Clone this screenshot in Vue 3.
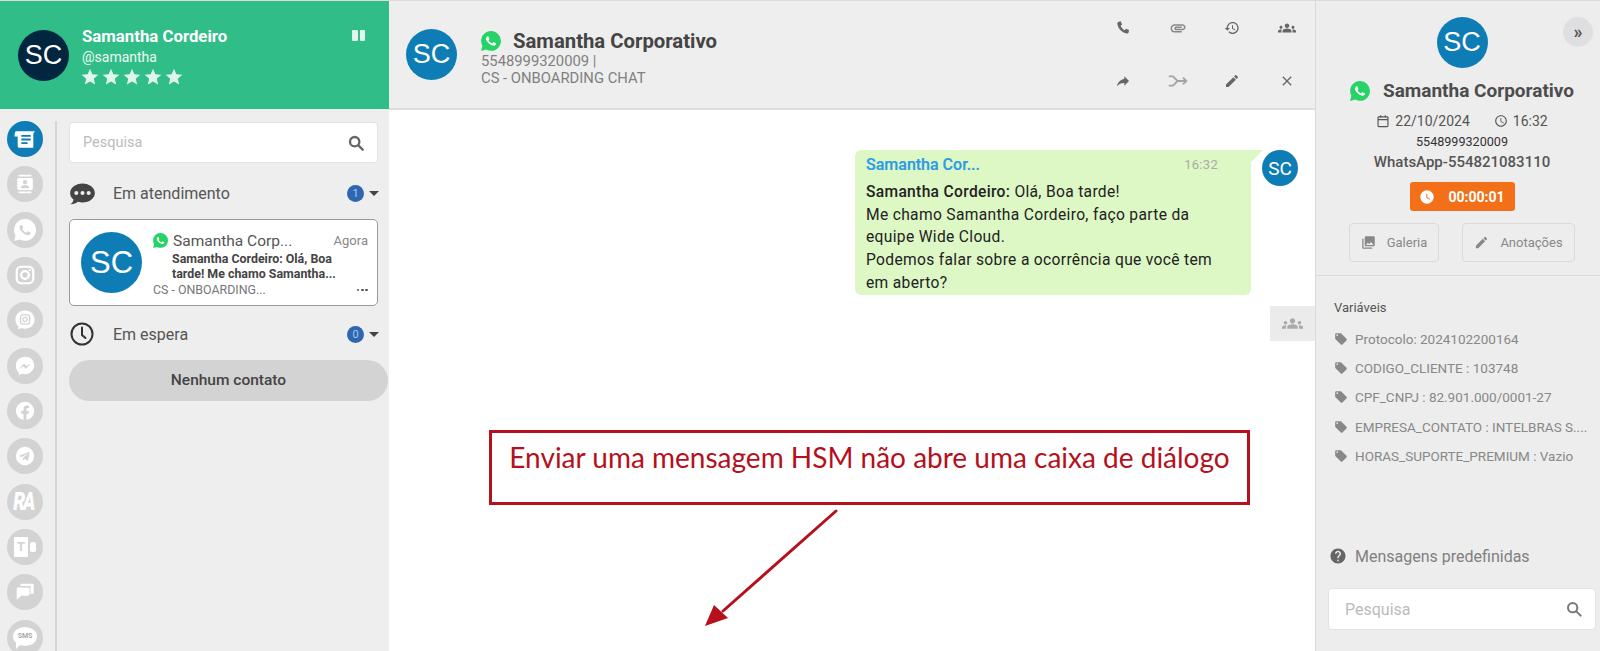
<script setup>
const icons = {
  waBubble: 'M12.05 0C5.495 0 .16 5.335.157 11.892c0 2.096.547 4.142 1.588 5.945L.057 24l6.305-1.654a11.882 11.882 0 005.683 1.448c6.554 0 11.89-5.335 11.893-11.893A11.821 11.821 0 0012.05 0z',
  waPhone: 'M17.472 14.382c-.297-.149-1.758-.867-2.03-.967-.273-.099-.471-.148-.67.15-.197.297-.767.966-.94 1.164-.173.199-.347.223-.644.075-.297-.15-1.255-.463-2.39-1.475-.883-.788-1.48-1.761-1.653-2.059-.173-.297-.018-.458.13-.606.134-.133.298-.347.446-.52.149-.174.198-.298.298-.497.099-.198.05-.371-.025-.52-.075-.149-.669-1.612-.916-2.207-.242-.579-.487-.5-.669-.51-.173-.008-.371-.01-.57-.01-.198 0-.52.074-.792.372-.272.297-1.04 1.016-1.04 2.479 0 1.462 1.065 2.875 1.213 3.074.149.198 2.096 3.2 5.077 4.487.709.306 1.262.489 1.694.625.712.227 1.36.195 1.871.118.571-.085 1.758-.719 2.006-1.413.248-.694.248-1.289.173-1.413-.074-.124-.272-.198-.57-.347z',
  star: 'M12 17.27L18.18 21l-1.64-7.03L22 9.24l-7.19-.61L12 2 9.19 8.63 2 9.24l5.46 4.73L5.82 21z',
  attach: 'M2 12.5C2 9.46 4.46 7 7.5 7H18c2.21 0 4 1.79 4 4s-1.79 4-4 4H9.5C8.12 15 7 13.88 7 12.5S8.12 10 9.5 10H17v2H9.41c-.55 0-.55 1 0 1H18c1.1 0 2-.9 2-2s-.9-2-2-2H7.5C5.57 9 4 10.57 4 12.5S5.57 16 7.5 16H17v2H7.5C4.46 18 2 15.54 2 12.5z',
  history: 'M13 3c-4.97 0-9 4.03-9 9H1l3.89 3.89.07.14L9 12H6c0-3.87 3.13-7 7-7s7 3.13 7 7-3.13 7-7 7c-1.93 0-3.68-.79-4.94-2.06l-1.42 1.42C8.27 19.99 10.51 21 13 21c4.97 0 9-4.03 9-9s-4.03-9-9-9zm-1 5v5l4.28 2.54.72-1.21-3.5-2.08V8H12z',
  group: 'M12 12.75c1.63 0 3.07.39 4.24.9 1.08.48 1.76 1.56 1.76 2.73V18H6v-1.61c0-1.18.68-2.26 1.76-2.73 1.17-.52 2.61-.91 4.24-.91zM4 13c1.1 0 2-.9 2-2s-.9-2-2-2-2 .9-2 2 .9 2 2 2zm1.13 1.1c-.37-.06-.74-.1-1.13-.1-.99 0-1.93.21-2.78.58C.48 14.9 0 15.62 0 16.43V18h4.5v-1.61c0-.83.23-1.61.63-2.29zM20 13c1.1 0 2-.9 2-2s-.9-2-2-2-2 .9-2 2 .9 2 2 2zm4 3.43c0-.81-.48-1.53-1.22-1.85-.85-.37-1.79-.58-2.78-.58-.39 0-.76.04-1.13.1.4.68.63 1.46.63 2.29V18H24v-1.57zM12 6c1.66 0 3 1.34 3 3s-1.34 3-3 3-3-1.34-3-3 1.34-3 3-3z',
  forward: 'M14 9V5l7 7-7 7v-4.1c-5 0-8.5 1.6-11 5.1 1-5 4-10 11-11z',
  edit: 'M3 17.25V21h3.75L17.81 9.94l-3.75-3.75L3 17.25zM20.71 7.04c.39-.39.39-1.02 0-1.41l-2.34-2.34c-.39-.39-1.02-.39-1.41 0l-1.83 1.83 3.75 3.75 1.83-1.83z',
  close: 'M19 6.41L17.59 5 12 10.59 6.41 5 5 6.41 10.59 12 5 17.59 6.41 19 12 13.41 17.59 19 19 17.59 13.41 12z',
  tag: 'M21.41 11.58l-9-9C12.05 2.22 11.55 2 11 2H4c-1.1 0-2 .9-2 2v7c0 .55.22 1.05.59 1.42l9 9c.36.36.86.58 1.41.58.55 0 1.05-.22 1.41-.59l7-7c.37-.36.59-.86.59-1.41 0-.55-.23-1.06-.59-1.42zM5.5 7C4.67 7 4 6.33 4 5.5S4.67 4 5.5 4 7 4.67 7 5.5 6.33 7 5.5 7z',
  help: 'M12 2C6.48 2 2 6.48 2 12s4.48 10 10 10 10-4.48 10-10S17.52 2 12 2zm1 17h-2v-2h2v2zm2.07-7.75l-.9.92C13.45 12.9 13 13.5 13 15h-2v-.5c0-1.1.45-2.1 1.17-2.83l1.24-1.26c.37-.36.59-.86.59-1.41 0-1.1-.9-2-2-2s-2 .9-2 2H8c0-2.21 1.79-4 4-4s4 1.79 4 4c0 .88-.36 1.68-.93 2.25z',
  clock: 'M11.99 2C6.47 2 2 6.48 2 12s4.47 10 9.99 10C17.52 22 22 17.52 22 12S17.52 2 11.99 2zM12 20c-4.42 0-8-3.58-8-8s3.58-8 8-8 8 3.58 8 8-3.58 8-8 8zm.5-13H11v6l5.25 3.15.75-1.23-4.5-2.67z',
  clockFill: 'M12 2C6.5 2 2 6.5 2 12s4.5 10 10 10 10-4.5 10-10S17.5 2 12 2zm4.2 14.2L11 13V7h1.5v5.2l4.5 2.7-.8 1.3z',
  gallery: 'M22 16V4c0-1.1-.9-2-2-2H8c-1.1 0-2 .9-2 2v12c0 1.1.9 2 2 2h12c1.1 0 2-.9 2-2zm-11-4l2.03 2.71L16 11l4 5H8l3-4zM2 6v14c0 1.1.9 2 2 2h14v-2H4V6H2z',
  phone: 'M5.5 2.5L8.6 2l2 4.6-2.2 1.9c.9 2.6 3.4 5.4 6.2 6.7l1.9-2.2 4.5 2-.5 3.2c-.3 1.3-1.6 2.3-3 2C10.300 19.200 4.500 12.800 3.500 5.800c-.2-1.500.8-3 2-3.300z',
  chatDots: 'M12 3C5.900 3 1 6.800 1 11.500c0 2.300 1.200 4.400 3 5.900-.2 1.700-1.200 3.200-2.800 4.100 2.800.1 5.100-.9 6.700-2.200 1.300.4 2.700.7 4.100.7 6.100 0 11-3.800 11-8.500S18.100 3 12 3zM6.500 13.300a1.800 1.800 0 110-3.600 1.800 1.800 0 010 3.600zm5.500 0a1.800 1.800 0 110-3.600 1.800 1.800 0 010 3.600zm5.500 0a1.800 1.800 0 110-3.600 1.800 1.800 0 010 3.600z',
  messenger: 'M12 2C6.400 2 2 6.100 2 11.700c0 2.900 1.200 5.500 3.200 7.200v3.100l3-1.600c1.200.3 2.500.5 3.800.5 5.600 0 10-4.100 10-9.700S17.600 2 12 2zm1 13l-2.600-2.700-5 2.700 5.500-5.800 2.600 2.700 4.900-2.700-5.400 5.800z',
  facebook: 'M22 12a10 10 0 10-11.600 9.900v-7H7.900V12h2.500V9.800c0-2.500 1.500-3.900 3.800-3.900 1.100 0 2.200.2 2.200.2v2.500h-1.200c-1.200 0-1.600.8-1.600 1.600V12h2.800l-.4 2.900h-2.400v7A10 10 0 0022 12z',
  telegram: 'M12 2a10 10 0 100 20 10 10 0 000-20zm5 6.500l-1.700 8.100c-.1.600-.5.700-1 .4l-2.600-1.900-1.300 1.200c-.2.200-.3.300-.6.300l.2-2.700 4.800-4.400c.2-.2 0-.3-.3-.1l-6 3.800-2.600-.8c-.6-.2-.6-.6.100-.8l10-3.900c.5-.2.900.1 1 .8z',
  gchat: 'M8 3h12a1.500 1.500 0 011.500 1.500v8A1.500 1.500 0 0120 14h-2v-8.500H7V4.500A1.500 1.500 0 018 3zM4 7h11.500A1.500 1.500 0 0117 8.500v6a1.500 1.500 0 01-1.500 1.500H8l-5 4.500V8.500A1.500 1.500 0 014 7z'
}

const variaveis = [
  'Protocolo: 2024102200164',
  'CODIGO_CLIENTE : 103748',
  'CPF_CNPJ : 82.901.000/0001-27',
  'EMPRESA_CONTATO : INTELBRAS S....',
  'HORAS_SUPORTE_PREMIUM : Vazio'
]
</script>

<template>
  <div class="app">
    <!-- coluna esquerda -->
    <aside class="left">
      <header class="profile">
        <div class="avatar dark size-51">SC</div>
        <div class="profile-info">
          <div class="profile-name">Samantha Cordeiro</div>
          <div class="profile-user">@samantha</div>
          <div class="stars">
            <svg v-for="n in 5" :key="n" viewBox="0 0 24 24"><path :d="icons.star" /></svg>
          </div>
        </div>
        <div class="pause"><span></span><span></span></div>
      </header>

      <div class="left-body">
        <nav class="rail">
          <div class="rail-btn active">
            <svg viewBox="0 0 24 24">
              <path d="M3 4h18l-1.500 2.500V20H6.500C5 20 4.500 19 4.500 17.500V9H1.500C1.500 6 2 4 3 4z" fill="#fff" />
              <path d="M8 8.500h9M8 12h9M8 15.500h6" stroke="#0f7db5" stroke-width="1.800" />
            </svg>
          </div>
          <div class="rail-btn">
            <svg viewBox="0 0 24 24">
              <path d="M5 2h14v1.800H5zM5 20.200h14V22H5z" fill="#fff" />
              <rect x="3.500" y="5.500" width="17" height="13" rx="1.500" fill="#fff" />
              <circle cx="12" cy="10" r="2.300" fill="#d3d3d3" />
              <path d="M7.500 16.500c0-2.500 2-3.400 4.500-3.400s4.500.9 4.500 3.400z" fill="#d3d3d3" />
            </svg>
          </div>
          <div class="rail-btn">
            <svg viewBox="0 0 24 24">
              <path :d="icons.waBubble" fill="#fff" />
              <path :d="icons.waPhone" fill="#d3d3d3" />
            </svg>
          </div>
          <div class="rail-btn">
            <svg viewBox="0 0 24 24" fill="none" stroke="#fff" stroke-width="2.400">
              <rect x="3" y="3" width="18" height="18" rx="5" />
              <circle cx="12" cy="12" r="4.200" />
              <circle cx="17.300" cy="6.700" r="1.200" fill="#fff" stroke="none" />
            </svg>
          </div>
          <div class="rail-btn">
            <svg viewBox="0 0 24 24">
              <path d="M12 1.500C6 1.500 1.500 5.800 1.500 11.500c0 3 1.200 5.600 3.300 7.400V22.500l3.200-1.700c1.200.4 2.600.7 4 .7 6 0 10.500-4.300 10.500-10S18 1.500 12 1.500z" fill="#fff" />
              <rect x="7" y="6.500" width="10" height="10" rx="2.800" fill="none" stroke="#d3d3d3" stroke-width="1.400" />
              <circle cx="12" cy="11.500" r="2.300" fill="none" stroke="#d3d3d3" stroke-width="1.400" />
            </svg>
          </div>
          <div class="rail-btn"><svg viewBox="0 0 24 24"><path :d="icons.messenger" fill="#fff" /></svg></div>
          <div class="rail-btn"><svg viewBox="0 0 24 24"><path :d="icons.facebook" fill="#fff" /></svg></div>
          <div class="rail-btn"><svg viewBox="0 0 24 24"><path :d="icons.telegram" fill="#fff" /></svg></div>
          <div class="rail-btn"><span class="rail-ra">RA</span></div>
          <div class="rail-btn">
            <span class="rail-teams"><b>T</b><i></i></span>
          </div>
          <div class="rail-btn"><svg viewBox="0 0 24 24"><path :d="icons.gchat" fill="#fff" /></svg></div>
          <div class="rail-btn">
            <span class="rail-sms">SMS</span>
          </div>
        </nav>

        <section class="contacts">
          <div class="search">
            <span>Pesquisa</span>
            <svg viewBox="0 0 24 24" fill="none" stroke="#666" stroke-width="3.500"><circle cx="10" cy="10" r="7" /><path d="M15.500 15.500L22 22" stroke-linecap="round" /></svg>
          </div>

          <div class="group-row first">
            <svg class="group-icon talk" viewBox="0 0 24 24"><path :d="icons.chatDots" fill="#444" /></svg>
            <span class="group-label">Em atendimento</span>
            <span class="badge">1</span>
            <span class="caret"></span>
          </div>

          <div class="card">
            <div class="avatar blue size-61">SC</div>
            <div class="card-body">
              <div class="card-top">
                <svg class="wa" viewBox="0 0 24 24"><path :d="icons.waBubble" fill="#25d366" /><path :d="icons.waPhone" fill="#fff" /></svg>
                <span class="card-name">Samantha Corp...</span>
                <span class="card-time">Agora</span>
              </div>
              <div class="card-msg">Samantha Cordeiro: Olá, Boa<br />tarde! Me chamo Samantha...</div>
              <div class="card-foot">
                <span>CS - ONBOARDING...</span>
                <span class="dots"><i></i><i></i><i></i></span>
              </div>
            </div>
          </div>

          <div class="group-row second">
            <svg class="group-icon" viewBox="0 0 24 24" fill="none" stroke="#333" stroke-width="2"><circle cx="12" cy="12" r="10.500" /><path d="M12 5.500V13l3.500 3" stroke-linecap="round" /></svg>
            <span class="group-label">Em espera</span>
            <span class="badge">0</span>
            <span class="caret"></span>
          </div>

          <div class="empty">Nenhum contato</div>
        </section>
      </div>
    </aside>

    <!-- conversa -->
    <main class="chat">
      <header class="chat-head">
        <div class="avatar blue size-51">SC</div>
        <div class="chat-info">
          <div class="chat-title">
            <svg class="wa-big" viewBox="0 0 24 24"><path :d="icons.waBubble" fill="#25d366" /><path :d="icons.waPhone" fill="#fff" /></svg>
            <span>Samantha Corporativo</span>
          </div>
          <div class="chat-sub">5548999320009 |</div>
          <div class="chat-sub">CS - ONBOARDING CHAT</div>
        </div>
        <div class="actions">
          <svg viewBox="0 0 24 24"><path :d="icons.phone" /></svg>
          <svg viewBox="0 0 24 24" class="light"><path :d="icons.attach" /></svg>
          <svg viewBox="0 0 24 24"><path :d="icons.history" /></svg>
          <svg viewBox="0 0 24 24" class="big"><path :d="icons.group" /></svg>
          <svg viewBox="0 0 24 24"><path :d="icons.forward" /></svg>
          <svg viewBox="0 0 24 24" class="wide" fill="none"><path d="M1 6.500h5l5.500 5.500-5.500 5.500H1M11.500 12H22M18 8l4 4-4 4" stroke="#a3a3a3" stroke-width="2.200" fill="none" /></svg>
          <svg viewBox="0 0 24 24"><path :d="icons.edit" /></svg>
          <svg viewBox="0 0 24 24"><path :d="icons.close" /></svg>
        </div>
      </header>

      <div class="chat-body">
        <div class="message">
          <div class="bubble">
            <div class="bubble-top">
              <span class="bubble-name">Samantha Cor...</span>
              <span class="bubble-time">16:32</span>
            </div>
            <div class="bubble-text">
              <b>Samantha Cordeiro:</b> Olá, Boa tarde!<br />
              Me chamo Samantha Cordeiro, faço parte da<br />
              equipe Wide Cloud.<br />
              Podemos falar sobre a ocorrência que você tem<br />
              em aberto?
            </div>
          </div>
          <div class="avatar blue size-36">SC</div>
        </div>

        <div class="side-tab">
          <svg viewBox="0 0 24 24"><path :d="icons.group" /></svg>
        </div>

        <div class="callout">Enviar uma mensagem HSM não abre uma caixa de diálogo</div>
        <svg class="arrow" viewBox="0 0 140 120">
          <line x1="131" y1="2" x2="18" y2="102" stroke="#b5101c" stroke-width="3" stroke-linecap="round" />
          <path d="M0 117L9 96 23 109z" fill="#b5101c" />
        </svg>
      </div>
    </main>

    <!-- detalhes -->
    <aside class="details">
      <button class="collapse">»</button>
      <div class="details-top">
        <div class="avatar blue size-51">SC</div>
        <div class="details-name">
          <svg class="wa-big" viewBox="0 0 24 24"><path :d="icons.waBubble" fill="#25d366" /><path :d="icons.waPhone" fill="#fff" /></svg>
          <span>Samantha Corporativo</span>
        </div>
        <div class="details-date">
          <svg viewBox="0 0 24 24" fill="none" stroke="#555" stroke-width="2"><rect x="3.500" y="5" width="17" height="16.500" rx="1.500" /><path d="M3.500 9.500h17M8 2v4M16 2v4" /></svg>
          <span>22/10/2024</span>
          <svg class="date-clock" viewBox="0 0 24 24"><path :d="icons.clock" fill="#555" /></svg>
          <span>16:32</span>
        </div>
        <div class="details-phone">5548999320009</div>
        <div class="details-channel">WhatsApp-554821083110</div>
        <div class="timer">
          <svg viewBox="0 0 24 24"><path :d="icons.clockFill" fill="#fff" /></svg>
          <span>00:00:01</span>
        </div>
        <div class="details-btns">
          <div class="ghost galeria"><svg viewBox="0 0 24 24"><path :d="icons.gallery" /></svg><span>Galeria</span></div>
          <div class="ghost anotacoes"><svg viewBox="0 0 24 24"><path :d="icons.edit" /></svg><span>Anotações</span></div>
        </div>
      </div>

      <div class="vars">
        <div class="vars-title">Variáveis</div>
        <div v-for="v in variaveis" :key="v" class="var-row">
          <svg viewBox="0 0 24 24"><path :d="icons.tag" /></svg>
          <span>{{ v }}</span>
        </div>
      </div>

      <div class="predef">
        <div class="predef-title">
          <svg viewBox="0 0 24 24"><path :d="icons.help" /></svg>
          <span>Mensagens predefinidas</span>
        </div>
        <div class="search predef-search">
          <span>Pesquisa</span>
          <svg viewBox="0 0 24 24" fill="none" stroke="#777" stroke-width="3"><circle cx="10" cy="10" r="7" /><path d="M15.500 15.500L22 22" stroke-linecap="round" /></svg>
        </div>
      </div>
    </aside>
  </div>
</template>

<style>
html, body {
  margin: 0;
  background: #fff;
}
</style>

<style scoped>
.app {
  display: flex;
  width: 1600px;
  height: 651px;
  overflow: hidden;
  font-family: Roboto, "Liberation Sans", sans-serif;
  color: #555;
  border-top: 1px solid #dcdcdc;
  box-sizing: border-box;
}

.avatar {
  display: flex;
  align-items: center;
  justify-content: center;
  flex: none;
  border-radius: 50%;
  color: #fff;
  font-family: "Liberation Sans", Arial, sans-serif;
}
.avatar.blue { background: #0f7db5; }
.avatar.dark { background: #022640; }
.size-51 { width: 51px; height: 51px; font-size: 27px; }
.size-61 { width: 61px; height: 61px; font-size: 31px; }
.size-36 { width: 36px; height: 36px; font-size: 19px; font-family: Roboto, sans-serif; }

/* esquerda */
.left {
  width: 389px;
  flex: none;
  display: flex;
  flex-direction: column;
  background: #eee;
}
.profile {
  height: 108px;
  flex: none;
  background: #30bd88;
  display: flex;
  align-items: center;
  padding: 0 24px 0 18px;
  color: #fff;
  box-sizing: border-box;
}
.profile-info {
  margin-left: 13px;
  flex: 1;
  margin-top: 1px;
}
.profile-name { font-size: 16.800px; font-weight: 700; line-height: 20px; margin-top: 1px; }
.profile-user { font-size: 14px; line-height: 20px; margin-top: 1px; color: #f0faf6; }
.stars { display: flex; gap: 1px; margin-left: -2px; }
.stars svg { width: 20px; height: 20px; fill: #e0f5ed; }
.pause { display: flex; gap: 2px; align-self: flex-start; margin-top: 29px; }
.pause span { width: 5.500px; height: 11px; background: #e0f5ed; border-radius: 1px; }

.left-body { flex: 1; display: flex; min-height: 0; }
.rail {
  width: 57px;
  flex: none;
  box-sizing: border-box;
  margin-top: 12px;
  padding: 0 0 0 7px;
  border-right: 2px solid #d6d6d6;
  display: flex;
  flex-direction: column;
  gap: 9.330px;
  overflow: hidden;
}
.rail-btn {
  width: 36px;
  height: 36px;
  flex: none;
  border-radius: 50%;
  background: #d3d3d3;
  display: flex;
  align-items: center;
  justify-content: center;
}
.rail-btn svg { width: 22px; height: 22px; }
.rail-btn.active { background: #0f7db5; }
.rail-btn.active svg { width: 25px; height: 25px; }
.rail-ra {
  color: #fff;
  font: italic 900 25px/1 Roboto, sans-serif;
  letter-spacing: -3px;
  transform: scaleX(.75);
  margin-left: -3px;
}
.rail-teams { display: flex; align-items: center; gap: 2px; }
.rail-teams b {
  display: block;
  width: 14px;
  height: 20px;
  background: #fff;
  color: #d3d3d3;
  font: 700 13px/20px Roboto, sans-serif;
  text-align: center;
}
.rail-teams i { display: block; width: 6px; height: 10px; background: #fff; border-radius: 2px; }
.rail-sms {
  position: relative;
  display: block;
  width: 24px;
  height: 19px;
  margin-top: -2px;
  border-radius: 50%;
  background: #fff;
  color: #a9a9a9;
  font: 700 7px/19px Roboto, sans-serif;
  text-align: center;
}
.rail-sms::after {
  content: "";
  position: absolute;
  left: 3px;
  bottom: -3px;
  border-top: 6px solid #fff;
  border-right: 6px solid transparent;
}

.contacts {
  flex: 1;
  padding: 13px 0 0 12px;
  min-width: 0;
}
.search {
  display: flex;
  align-items: center;
  justify-content: space-between;
  box-sizing: border-box;
  width: 309px;
  height: 41px;
  padding: 0 13px;
  background: #fff;
  border: 1px solid #e2e2e2;
  border-radius: 4px;
  font-size: 14.5px;
  color: #bbb;
}
.search svg { width: 16px; height: 16px; }
.group-row {
  display: flex;
  align-items: center;
  width: 310px;
  height: 24px;
}
.group-row.first { margin-top: 18px; }
.group-row.second { margin-top: 16px; }
.group-icon { width: 24px; height: 24px; margin-left: 1px; flex: none; }
.group-icon.talk { width: 27px; height: 27px; margin-left: 0; }
.group-label { font-size: 16px; color: #555; margin-left: 19px; flex: 1; }
.group-icon.talk + .group-label { margin-left: 17px; }
.badge {
  width: 17px;
  height: 17px;
  border-radius: 50%;
  background: #2f66b0;
  color: #a9c6ea;
  font-size: 11px;
  line-height: 17px;
  text-align: center;
}
.caret {
  width: 0;
  height: 0;
  margin-left: 5px;
  border: 5px solid transparent;
  border-top: 5px solid #444;
  border-bottom: 0;
}
.card {
  display: flex;
  box-sizing: border-box;
  width: 309px;
  height: 87px;
  margin-top: 14px;
  padding: 12px 9px 0 11px;
  background: #fff;
  border: 1px solid #9a9a9a;
  border-radius: 5px;
}
.card-body { flex: 1; margin-left: 11px; min-width: 0; }
.card-top { display: flex; align-items: center; height: 21px; margin-top: -2px; }
.wa { width: 15px; height: 15px; flex: none; }
.card-name { margin-left: 5px; font-size: 15.500px; color: #555; flex: 1; }
.card-time { font-size: 13px; color: #888; }
.card-msg {
  margin-left: 19px;
  margin-top: 1px;
  font-size: 12.400px;
  line-height: 14.500px;
  font-weight: 700;
  color: #444;
}
.card-foot {
  display: flex;
  align-items: center;
  justify-content: space-between;
  margin-top: 1px;
  font-size: 12.400px;
  color: #777;
  line-height: 16px;
}
.dots { display: flex; gap: 1.500px; }
.dots i { width: 2.800px; height: 2.800px; background: #555; border-radius: 50%; }
.empty {
  box-sizing: border-box;
  width: 319px;
  height: 41px;
  margin-top: 14px;
  border-radius: 21px;
  background: #d3d3d3;
  color: #444;
  font-size: 15.500px;
  font-weight: 500;
  line-height: 41px;
  text-align: center;
}

/* conversa */
.chat {
  width: 926px;
  flex: none;
  display: flex;
  flex-direction: column;
  background: #fff;
}
.chat-head {
  height: 109px;
  flex: none;
  box-sizing: border-box;
  background: #eee;
  border-bottom: 2px solid #ddd;
  display: flex;
  align-items: center;
  padding: 0 0 0 17px;
}
.chat-info { margin-left: 24px; flex: 1; margin-top: 9px; }
.chat-title {
  display: flex;
  align-items: center;
  gap: 12px;
  font-size: 20.300px;
  font-weight: 700;
  color: #444;
  line-height: 24px;
  margin-top: -2px;
}
.wa-big { width: 20px; height: 20px; flex: none; }
.chat-sub { font-size: 14.800px; line-height: 17px; color: #808080; }
.actions {
  display: grid;
  grid-template-columns: repeat(4, 54.500px);
  grid-template-rows: 53px 53px;
  justify-items: center;
  align-items: center;
  margin-right: 1px;
}
.actions svg { width: 16px; height: 16px; fill: #666; }
.actions .light { fill: #888; width: 18px; height: 18px; }
.actions .big { width: 18px; height: 18px; }
.actions .wide { width: 20px; height: 20px; }
.chat-body {
  flex: 1;
  position: relative;
  padding: 40px 0 0 0;
  overflow: hidden;
}
.message {
  display: flex;
  align-items: flex-start;
  justify-content: flex-end;
  gap: 11px;
  padding-right: 17px;
}
.bubble {
  position: relative;
  width: 396px;
  height: 145px;
  box-sizing: border-box;
  padding: 5px 12px 0 11px;
  background: #ddf7c5;
  border-radius: 0 0 6px 6px;
  border-top-left-radius: 6px;
}
.bubble::after {
  content: "";
  position: absolute;
  top: 0;
  right: -12px;
  border-top: 12px solid #ddf7c5;
  border-right: 12px solid transparent;
}
.bubble-top {
  display: flex;
  align-items: center;
  justify-content: space-between;
  height: 18px;
  padding-right: 21px;
}
.bubble-name { font-size: 16px; font-weight: 500; color: #2b9be4; -webkit-text-stroke: .2px #2b9be4; }
.bubble-time { font-size: 13px; color: #aaa; letter-spacing: .3px; }
.bubble-text {
  margin-top: 8px;
  font-size: 15.600px;
  line-height: 22.700px;
  letter-spacing: .32px;
  color: #222;
  white-space: nowrap;
}
.bubble-text b { font-weight: 500; }
.side-tab {
  margin: 11px 0 0 auto;
  width: 45px;
  height: 35px;
  background: #ebebeb;
  display: flex;
  align-items: center;
  justify-content: center;
}
.side-tab svg { width: 21px; height: 21px; fill: #aaa; }
.callout {
  position: absolute;
  left: 100px;
  top: 320px;
  width: 761px;
  height: 75px;
  box-sizing: border-box;
  border: 3.500px solid #b5101c;
  padding-top: 4px;
  font-family: Lato, "Open Sans", sans-serif;
  font-size: 28px;
  line-height: 40px;
  color: #b5101c;
  text-align: center;
  white-space: nowrap;
}
.arrow {
  position: absolute;
  left: 316px;
  top: 399px;
  width: 140px;
  height: 120px;
}

/* detalhes */
.details {
  position: relative;
  flex: 1;
  display: flex;
  flex-direction: column;
  background: #ededed;
  border-left: 1px solid #d9d9d9;
  min-width: 0;
}
.collapse {
  position: absolute;
  top: 16px;
  right: 7px;
  width: 30px;
  height: 30px;
  padding: 0;
  border: 0;
  border-radius: 50%;
  background: #dfdfe1;
  color: #555;
  font: 700 18px/26px Roboto, sans-serif;
}
.details-top {
  display: flex;
  flex-direction: column;
  align-items: center;
  height: 275px;
  flex: none;
  box-sizing: border-box;
  padding: 16px 0 0 8px;
  border-bottom: 1px solid #dcdcdc;
}
.details-name {
  display: flex;
  align-items: center;
  gap: 13px;
  margin-top: 10px;
  font-size: 19px;
  font-weight: 700;
  color: #4c4c4c;
  line-height: 26px;
  white-space: nowrap;
}
.details-date {
  display: flex;
  align-items: center;
  margin-top: 7px;
  font-size: 14px;
  color: #555;
  line-height: 20px;
}
.details-date svg { width: 14px; height: 14px; margin-right: 5px; }
.details-date .date-clock { margin-left: 24px; }
.details-phone { margin-top: 2px; font-size: 12.600px; color: #333; line-height: 18px; }
.details-channel { margin-top: 1px; font-size: 15px; font-weight: 500; color: #555; line-height: 20px; }
.timer {
  display: flex;
  align-items: center;
  justify-content: center;
  gap: 13px;
  box-sizing: border-box;
  width: 105px;
  height: 29px;
  margin-top: 10px;
  background: #f37019;
  border-radius: 3px;
  color: #fff;
  font-size: 14px;
  font-weight: 700;
}
.timer svg { width: 16px; height: 16px; }
.details-btns { display: flex; gap: 23px; margin-top: 12px; margin-left: 0; }
.ghost {
  display: flex;
  align-items: center;
  justify-content: center;
  gap: 11px;
  box-sizing: border-box;
  height: 39px;
  border: 1px solid #dadada;
  border-radius: 4px;
  font-size: 13px;
  color: #888;
}
.ghost svg { width: 15px; height: 15px; fill: #888; }
.galeria { width: 90px; }
.anotacoes { width: 113px; }
.vars { padding: 23px 0 0 18px; }
.vars-title { font-size: 13px; color: #555; line-height: 18px; margin-bottom: 7px; }
.var-row {
  display: flex;
  align-items: center;
  gap: 7px;
  height: 29.400px;
  font-size: 13.500px;
  color: #888;
  white-space: nowrap;
}
.var-row svg { width: 14px; height: 14px; fill: #888; flex: none; }
.predef { margin-top: auto; padding: 0 0 21px 12px; }
.predef-title {
  display: flex;
  align-items: center;
  gap: 8px;
  font-size: 16px;
  color: #808080;
  margin-left: 1px;
  height: 24px;
}
.predef-title svg { width: 18px; height: 18px; fill: #666; }
.predef-search {
  width: 268px;
  height: 42px;
  margin-top: 20px;
  padding: 0 13px 0 16px;
  font-size: 16px;
}
</style>
